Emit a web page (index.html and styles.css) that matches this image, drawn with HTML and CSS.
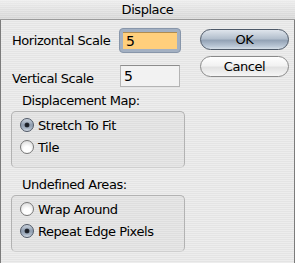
FILE: index.html
```html
<!DOCTYPE html>
<html>
<head>
<meta charset="utf-8">
<link rel="stylesheet" href="styles.css">
</head>
<body>
<div class="window">
  <div class="titlebar">Displace</div>
  <div class="content">
    <div class="left">
      <div class="field-row first">
        <span class="label">Horizontal Scale</span>
        <span class="focus-ring"><span class="field focused">5</span></span>
      </div>
      <div class="field-row second">
        <span class="label">Vertical Scale</span>
        <span class="field plain">5</span>
      </div>
      <div class="group-title">Displacement Map:</div>
      <div class="group">
        <div class="radio-row"><span class="radio on"></span><span>Stretch To Fit</span></div>
        <div class="radio-row"><span class="radio"></span><span>Tile</span></div>
      </div>
      <div class="group-title second-title">Undefined Areas:</div>
      <div class="group">
        <div class="radio-row"><span class="radio"></span><span>Wrap Around</span></div>
        <div class="radio-row"><span class="radio on"></span><span>Repeat Edge Pixels</span></div>
      </div>
    </div>
    <div class="right">
      <div class="btn default">OK</div>
      <div class="btn">Cancel</div>
    </div>
  </div>
</div>
</body>
</html>
```
FILE: styles.css
```css
html, body { margin: 0; padding: 0; }
body {
  font-family: "DejaVu Sans", sans-serif;
  font-size: 13px;
  letter-spacing: -0.45px;
  color: #000;
  background: #e8e8e8;
}
.window {
  width: 295px;
  height: 263px;
  box-sizing: border-box;
  border-left: 1px solid #7c7c7c;
  border-right: 1px solid #7c7c7c;
  background: repeating-linear-gradient(to bottom, #ededed 0px, #ededed 1px, #e4e4e4 1px, #e4e4e4 2px);
}
.titlebar {
  height: 19px;
  line-height: 19px;
  text-align: center;
  font-size: 13px;
  border-bottom: 1px solid #9a9a9a;
  background: repeating-linear-gradient(to bottom, rgba(255,255,255,0.25) 0px, rgba(255,255,255,0.25) 1px, rgba(0,0,0,0) 1px, rgba(0,0,0,0) 2px), linear-gradient(to bottom, #ececec, #d4d4d4);
  margin: 0 -1px;
}
.content {
  display: flex;
  padding: 8px 0 0 10px;
}
.left { width: 174px; }
.right {
  margin-left: 15px;
  width: 89px;
  display: flex;
  flex-direction: column;
  padding-top: 1px;
}
.field-row {
  display: flex;
  align-items: center;
}
.field-row .label { padding-left: 1px; width: 107px; }
.field-row.first { height: 25px; }
.field-row.second { margin-top: 12px; height: 22px; }
.field-row.second .label { width: 108px; padding-top: 5px; }
.focus-ring {
  display: block;
  width: 62px;
  height: 25px;
  box-sizing: border-box;
  border-radius: 4px;
  background: #a3b0c2;
  border: 1px solid #8896aa;
  padding: 3px;
}
.field {
  display: block;
  box-sizing: border-box;
  font-size: 14px;
  padding-left: 3px;
  line-height: 17px;
}
.field.focused {
  height: 17px;
  background: #ffcf7c;
  border-top: 1px solid #b08c50;
  line-height: 16px;
}
.field.plain {
  width: 60px;
  height: 22px;
  line-height: 20px;
  background: #f2f2f2;
  border: 1px solid #b4b4b4;
  border-top-color: #8c8c8c;
}
.group-title {
  padding-left: 11px;
  height: 16px;
  line-height: 16px;
  margin-top: 6px;
}
.group-title.second-title { margin-top: 9px; }
.group {
  margin-top: 2px;
  height: 57px;
  box-sizing: border-box;
  border: 1px solid #b2b2b2;
  border-bottom-color: #cfcfcf;
  border-radius: 5px;
  background: rgba(0,0,0,0.025);
  padding: 2px 0 0 8px;
}
.radio-row {
  display: flex;
  align-items: center;
  height: 22px;
  gap: 4px;
}
.radio {
  width: 14px;
  height: 14px;
  box-sizing: border-box;
  border-radius: 50%;
  border: 1px solid #777;
  background: radial-gradient(circle at 50% 70%, #ffffff 30%, #e6e6e6 70%, #cfcfcf 100%);
  position: relative;
  flex: none;
}
.radio.on {
  border-color: #4f5866;
  background: linear-gradient(to bottom, #c9d2dd 0%, #8f9db0 50%, #a9b6c6 80%, #d6dde6 100%);
}
.radio.on::after {
  content: "";
  position: absolute;
  left: 4px;
  top: 4px;
  width: 4px;
  height: 4px;
  border-radius: 50%;
  background: #1a1e26;
  box-shadow: 0 0 0 0.5px #3a404a;
}
.btn {
  height: 21px;
  box-sizing: border-box;
  border-radius: 11px;
  text-align: center;
  line-height: 19px;
  font-size: 13px;
  border: 1px solid #8a8a8a;
  background: linear-gradient(to bottom, #ffffff 0%, #f2f2f2 45%, #e2e2e2 55%, #f6f6f6 100%);
}
.btn + .btn { margin-top: 6px; }
.btn.default {
  border-color: #4e5968;
  background: linear-gradient(to bottom, #dfe5ec 0%, #b3bfcd 45%, #94a3b6 55%, #b9c6d5 85%, #d7dfe8 100%);
}
```
